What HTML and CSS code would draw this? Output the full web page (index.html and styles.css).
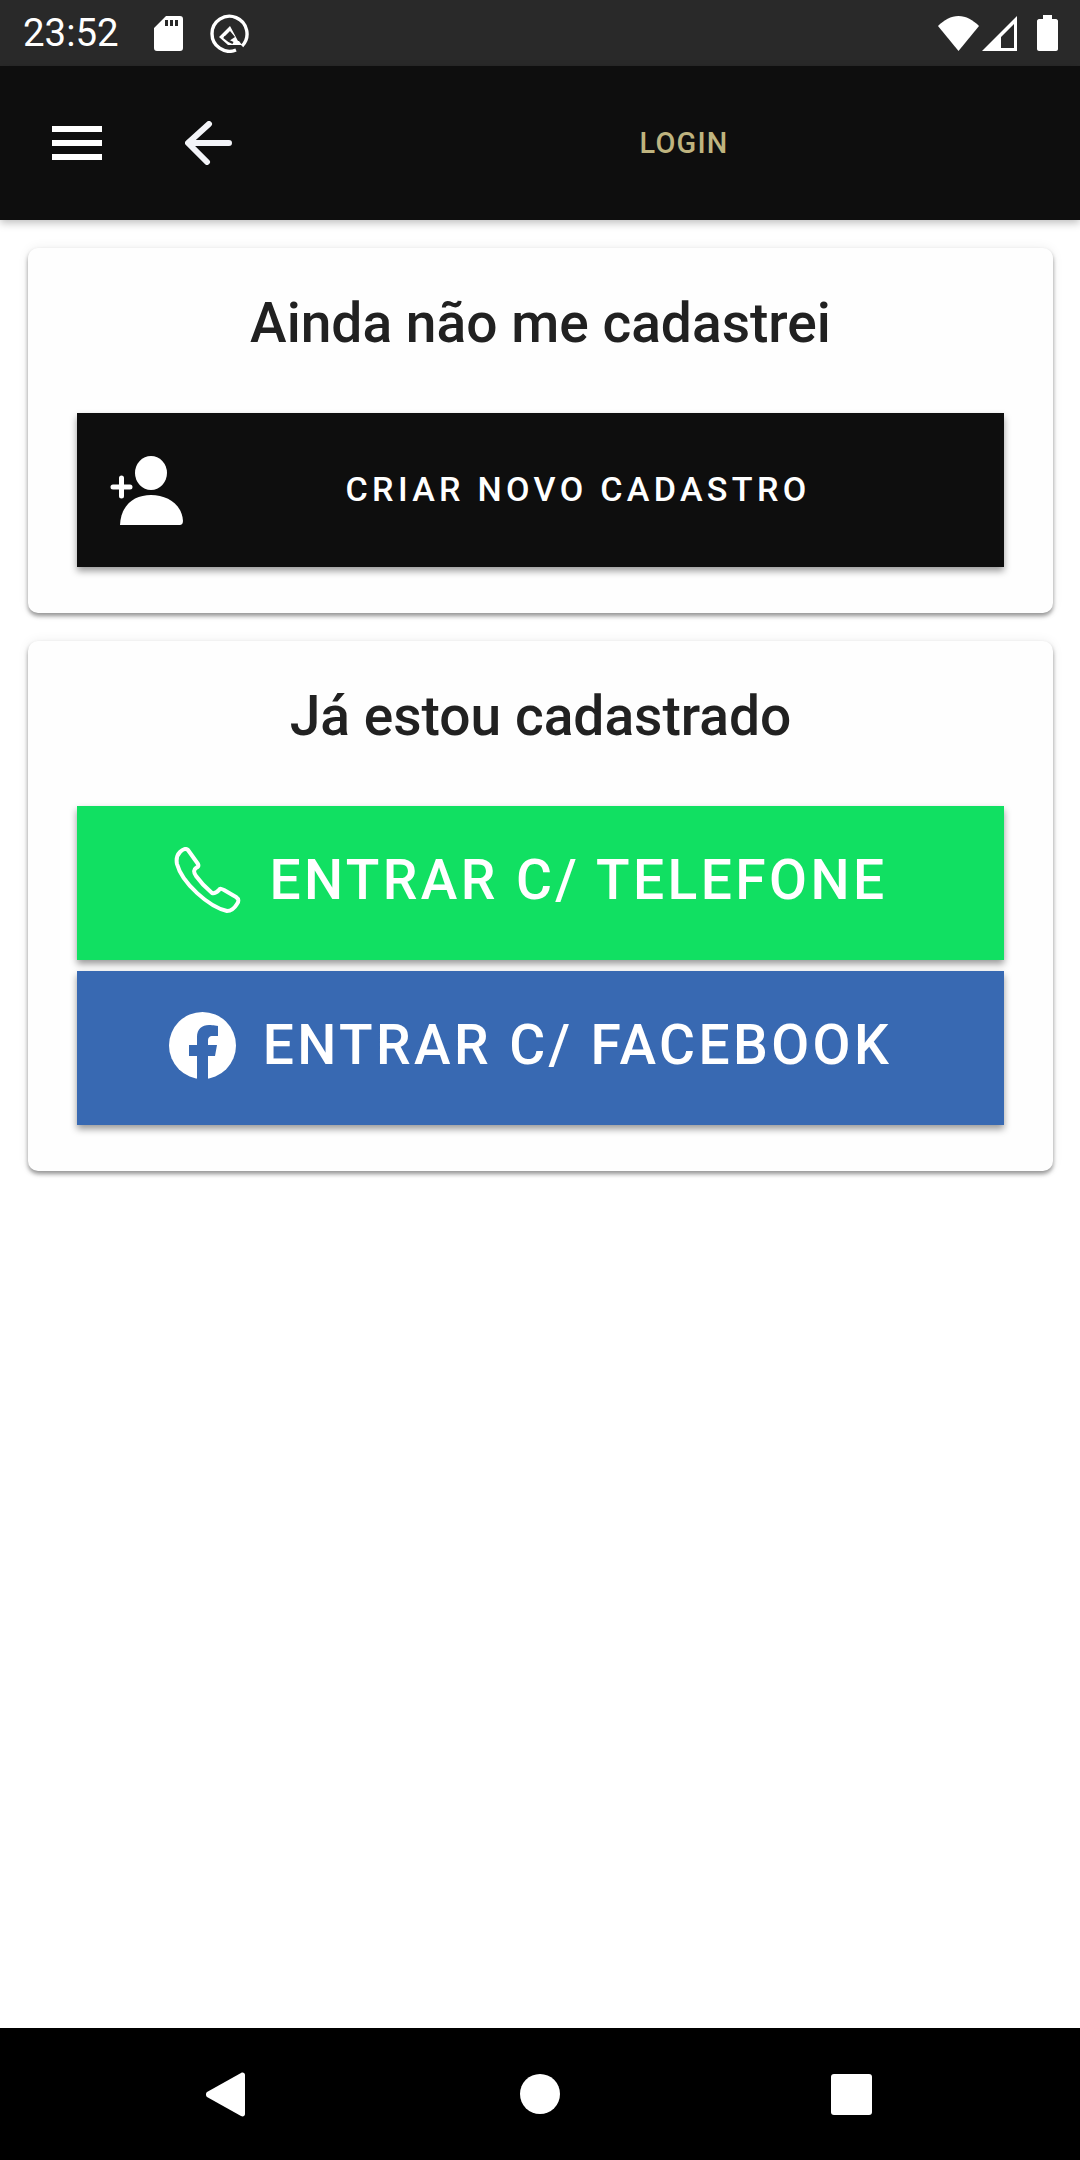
FILE: index.html
```html
<!DOCTYPE html>
<html lang="pt-br">
<head>
    <meta charset="UTF-8">
    <title>Login</title>
    <link rel="stylesheet" href="styles.css">
</head>
<body>
    <div class="status-bar">
        <span class="status-time">23:52</span>
        <svg class="icon-sd" viewBox="0 0 29 35"><path fill="#fff" fill-rule="evenodd" d="M12 0H26C28 0 29 1 29 3V32C29 34 28 35 26 35H3C1 35 0 34 0 32V12ZM11 4V10H14V4ZM16 4V10H19V4ZM21 4V10H24V4Z"/></svg>
        <svg class="icon-q" viewBox="0 0 39 39"><path fill="none" stroke="#fff" stroke-width="3.4" d="M32 32A17.500 17.500 0 1 0 26 36"/><path fill="#fff" fill-rule="evenodd" d="M20 12L9 23 18 31H32L29 27 28 27ZM20 17L25 23 19 27 14 23Z"/><path fill="none" stroke="#292929" stroke-width="2.500" d="M14 23L19 27 23 29"/></svg>
        <span class="status-space"></span>
        <svg class="icon-wifi" viewBox="0 0 41 35"><path fill="#fff" d="M0 10C6 4 13 0 20.500 0S35 4 41 10L20.500 35Z"/></svg>
        <svg class="icon-signal" viewBox="0 0 35 35"><path fill="#fff" fill-rule="evenodd" d="M35 0V35H0ZM32 8L19 21V32H32Z"/></svg>
        <svg class="icon-battery" viewBox="0 0 21 36"><path fill="#fff" d="M6 0H15V4H19C20 4 21 5 21 6V34C21 35 20 36 19 36H2C1 36 0 35 0 34V6C0 5 1 4 2 4H6Z"/></svg>
    </div>
    <div class="header">
        <div class="menu-icon"><span></span><span></span><span></span></div>
        <svg class="icon-back" viewBox="0 0 47 44"><path fill="none" stroke="#f3f4f8" stroke-width="6" stroke-linecap="round" stroke-linejoin="round" d="M44 22H4M24 3L3 22 22 41"/></svg>
        <h1 class="header-title">LOGIN</h1>
    </div>
    <div class="main">
        <section class="card">
            <h2 class="card-title">Ainda não me cadastrei</h2>
            <div class="btn btn-new">
                <svg class="icon-person" viewBox="0 0 73 69">
                    <ellipse cx="41" cy="17" rx="16" ry="17" fill="#fff"/>
                    <path fill="#fff" d="M10 69C11 48 25 39 41 39S72 48 73 65C73 68 71 69 70 69Z"/>
                    <path fill="none" stroke="#fff" stroke-width="5" stroke-linecap="round" d="M3 31H20M11.500 22V40"/>
                </svg>
                <span class="btn-label">CRIAR NOVO CADASTRO</span>
            </div>
        </section>
        <section class="card">
            <h2 class="card-title">Já estou cadastrado</h2>
            <div class="btn btn-phone">
                <svg class="icon-phone" viewBox="0 0 67 67"><path fill="none" stroke="#fff" stroke-width="4" stroke-linejoin="round" d="M6 5C9 2 12 1 14 3L24 17C25 19 24 20 22 21C19 23 20 26 22 29C27 36 32 41 38 46C41 47 43 45 45 43C46 41 48 42 50 43L62 50C65 52 65 54 63 57C60 62 57 64 53 64C35 60 8 36 3 17C2 12 3 8 6 5Z"/></svg>
                <span class="btn-big">ENTRAR C/ TELEFONE</span>
            </div>
            <div class="btn btn-facebook">
                <svg class="icon-fb" viewBox="0 0 67 67"><circle cx="33.500" cy="33.500" r="33.500" fill="#fff"/><path fill="#3869b2" d="M28 67V44H20V33H28V25C28 17 33 13 40 13C44 13 49 14 49 14V24H44C40 24 39 26 39 29V33H48L46 44H39V67Z"/></svg>
                <span class="btn-big">ENTRAR C/ FACEBOOK</span>
            </div>
        </section>
    </div>
    <div class="nav-bar">
        <svg class="nav-back" viewBox="0 0 39 45"><path fill="#fff" d="M1 20L35 1C37 0 39 1 39 3V42C39 44 37 45 35 44L1 25C-0.300 24 -0.300 21 1 20Z"/></svg>
        <span class="nav-home"></span>
        <span class="nav-recent"></span>
    </div>
</body>
</html>
```

FILE: styles.css
```css
body {
    margin: 0;
    height: 2160px;
    display: flex;
    flex-direction: column;
    background: #fff;
    font-family: Roboto, 'Noto Sans', sans-serif;
    color: #212121;
    overflow: hidden;
}
.status-bar {
    height: 66px;
    background: #292929;
    display: flex;
    align-items: center;
    padding: 0 22px 0 23px;
    color: #fff;
}
.status-time {
    font-size: 38.400px;
    line-height: 66px;
    width: 131px;
}
.status-space {
    flex: 1;
}
.icon-sd {
    width: 29px;
    height: 35px;
    margin-right: 27px;
}
.icon-q {
    width: 39px;
    height: 39px;
}
.icon-wifi {
    width: 41px;
    height: 35px;
    margin-right: 3px;
}
.icon-signal {
    width: 35px;
    height: 35px;
    margin-right: 20px;
}
.icon-battery {
    width: 21px;
    height: 36px;
}
.header {
    height: 154px;
    background: #0e0e0e;
    display: flex;
    align-items: center;
    padding-left: 52px;
    box-shadow: 0 3px 8px rgba(0,0,0,0.25);
    position: relative;
}
.menu-icon {
    width: 50px;
    display: flex;
    flex-direction: column;
    gap: 8px;
}
.menu-icon span {
    height: 6px;
    background: #fff;
}
.icon-back {
    width: 47px;
    height: 44px;
    margin-left: 83px;
}
.header-title {
    flex: 1;
    margin: 0;
    padding-left: 56px;
    text-align: center;
    font-size: 28.875px;
    font-weight: 500;
    letter-spacing: 1.200px;
    color: #bfb47f;
}
.main {
    flex: 1;
    padding: 28px 27px 0 28px;
    display: flex;
    flex-direction: column;
    gap: 28px;
}
.card {
    background: #fefefe;
    border-radius: 10px;
    box-shadow: 0 3px 4px rgba(0,0,0,0.4), 0 0 12px rgba(0,0,0,0.07);
    padding: 0 49px 46px 49px;
    display: flex;
    flex-direction: column;
    gap: 11px;
}
.card-title {
    margin: 0;
    height: 154px;
    line-height: 150px;
    text-align: center;
    font-size: 55.125px;
    font-weight: 500;
}
.btn {
    height: 154px;
    display: flex;
    align-items: center;
    justify-content: center;
    color: #fff;
    box-shadow: 0 4px 7px rgba(0,0,0,0.4);
}
.btn-new {
    background: #0e0e0e;
    padding: 0 33px;
}
.btn-phone {
    background: #11e062;
    padding-right: 20px;
}
.btn-facebook {
    background: #3869b2;
    padding-right: 20px;
}
.btn-label {
    flex: 1;
    text-align: center;
    font-size: 34.125px;
    font-weight: 500;
    letter-spacing: 4.300px;
    margin: -2px 0 0 2px;
}
.btn-big {
    font-size: 55.125px;
    font-weight: 500;
    letter-spacing: 3.400px;
    margin-top: -6px;
}
.icon-person {
    width: 73px;
    height: 69px;
}
.icon-phone {
    width: 67px;
    height: 67px;
    margin: -6px 29px 0 0;
}
.icon-fb {
    width: 67px;
    height: 67px;
    margin: -6px 27px 0 0;
}
.nav-bar {
    height: 132px;
    background: #000;
    display: flex;
    align-items: center;
    position: relative;
    padding-left: 206px;
}
.nav-back {
    width: 39px;
    height: 45px;
    margin-right: 275px;
}
.nav-home {
    width: 40px;
    height: 40px;
    border-radius: 50%;
    background: #fff;
    margin-right: 271px;
}
.nav-recent {
    width: 41px;
    height: 41px;
    border-radius: 3px;
    background: #fff;
}
```
